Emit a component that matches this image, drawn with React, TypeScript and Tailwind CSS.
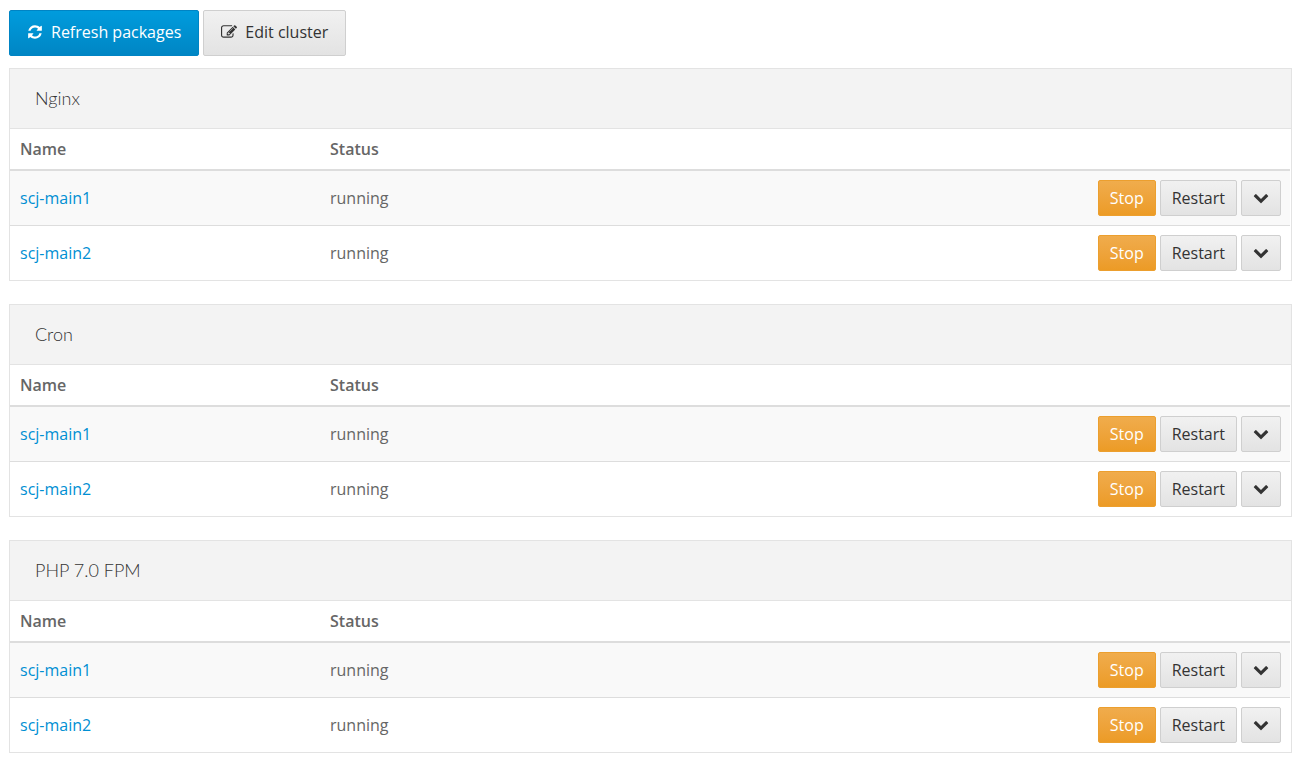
import clsx from 'clsx'
import type { ButtonHTMLAttributes } from 'react'

interface Node {
  name: string
  status: string
}

interface Service {
  id: string
  title: string
  nodes: Node[]
}

const nodes: Node[] = [
  { name: 'scj-main1', status: 'running' },
  { name: 'scj-main2', status: 'running' },
]

const services: Service[] = [
  { id: 'nginx', title: 'Nginx', nodes },
  { id: 'cron', title: 'Cron', nodes },
  { id: 'php-fpm', title: 'PHP 7.0 FPM', nodes },
]

const ICONS = {
  refresh:
    'M1639 1056q0 5-1 7-64 268-268 434.5t-478 166.5q-146 0-282.5-55t-243.5-157l-129 129q-19 19-45 19t-45-19-19-45v-448q0-26 19-45t45-19h448q26 0 45 19t19 45-19 45l-137 137q71 66 161 102t187 36q134 0 250-65t186-179q11-17 53-117 8-23 30-23h192q13 0 22.5 9.5t9.5 22.5zm25-800v448q0 26-19 45t-45 19h-448q-26 0-45-19t-19-45 19-45l138-138q-148-137-349-137-134 0-250 65t-186 179q-11 17-53 117-8 23-30 23h-199q-13 0-22.5-9.5t-9.5-22.5v-7q65-268 270-434.5t480-166.5q146 0 284 55.5t245 156.5l130-129q19-19 45-19t45 19 19 45z',
  edit: 'M888 1184l116-116-152-152-116 116v56h96v96h56zm440-720q-16-16-33 1l-350 350q-17 17-1 33t33-1l350-350q17-17 1-33zm80 594v190q0 119-84.5 203.5t-203.5 84.5h-832q-119 0-203.5-84.5t-84.5-203.5v-832q0-119 84.5-203.5t203.5-84.5h832q63 0 117 25 15 7 18 23 3 17-9 29l-49 49q-14 14-32 8-23-6-45-6h-832q-66 0-113 47t-47 113v832q0 66 47 113t113 47h832q66 0 113-47t47-113v-126q0-13 9-22l64-64q15-15 35-7t20 29zm-96-738l288 288-672 672h-288v-288zm444 132l-92 92-288-288 92-92q28-28 68-28t68 28l152 152q28 28 28 68t-28 68z',
  chevronDown:
    'M1683 728l-742 741q-19 19-45 19t-45-19l-742-741q-19-19-19-45.5t19-45.5l166-165q19-19 45-19t45 19l531 531 531-531q19-19 45-19t45 19l166 165q19 19 19 45.5t-19 45.5z',
}

function Icon({ name }: { name: keyof typeof ICONS }) {
  return (
    <svg viewBox="0 0 1792 1792" fill="currentColor" aria-hidden="true" className="size-4 shrink-0">
      <path d={ICONS[name]} />
    </svg>
  )
}

interface ButtonProps extends ButtonHTMLAttributes<HTMLButtonElement> {
  variant?: 'default' | 'primary' | 'warning'
  size?: 'sm' | 'lg'
}

function Button({ variant = 'default', size = 'sm', className, ...props }: ButtonProps) {
  return (
    <button
      type="button"
      className={clsx(
        'inline-flex items-center rounded-xs border bg-linear-to-b text-base/6 cursor-pointer',
        variant === 'default' && 'border-[#cfcfcf] from-[#f1f1f1] to-[#e3e3e3] text-[#333]',
        variant === 'primary' && 'border-[#0084c4] from-[#009cdd] to-[#0086c4] text-white',
        variant === 'warning' && 'border-[#ec9f2e] from-[#f0ac4c] to-[#ec9b25] text-white',
        size === 'lg' ? 'h-[46px] gap-2 px-[17px] pb-0.5' : 'h-9 px-[11px]',
        className,
      )}
      {...props}
    />
  )
}

function ServicePanel({ service }: { service: Service }) {
  return (
    <section className="border border-[#e3e3e3] bg-white">
      <h2 className="border-b border-[#e3e3e3] bg-[#f3f3f3] px-[25px] py-4 font-[Lato] text-lg/[27px] font-light text-[#333]">
        {service.title}
      </h2>

      <div className="pr-px">
        <table className="w-full table-fixed border-separate border-spacing-0 text-left">
          <thead>
            <tr className="h-[42px]">
              <th className="w-[310px] border-b-2 border-[#ddd] px-[10px] font-semibold">Name</th>
              <th className="border-b-2 border-[#ddd] px-[10px] font-semibold">Status</th>
              <th className="w-[210px] border-b-2 border-[#ddd]" aria-label="Actions" />
            </tr>
          </thead>
          <tbody className="[&>tr:nth-child(odd)]:bg-[#f9f9f9] [&>tr+tr>td]:border-t [&>tr+tr>td]:border-[#ddd]">
            {service.nodes.map((node) => (
              <tr key={node.name}>
                <td className="px-[10px] py-[9px]">
                  <a href={`#${service.id}/${node.name}`} className="text-[#008fd3] hover:underline">
                    {node.name}
                  </a>
                </td>
                <td className="px-[10px] py-[9px]">{node.status}</td>
                <td className="px-[9px] py-[9px]">
                  <div className="flex justify-end gap-1">
                    <Button variant="warning">Stop</Button>
                    <Button>Restart</Button>
                    <Button aria-label={`More actions for ${node.name}`}>
                      <Icon name="chevronDown" />
                    </Button>
                  </div>
                </td>
              </tr>
            ))}
          </tbody>
        </table>
      </div>
    </section>
  )
}

export default function App() {
  return (
    <main className="min-h-screen bg-white pt-[10px] pr-[5px] pb-2 pl-[9px] font-['Open_Sans',sans-serif] text-base/6 text-[#666]">
      <div className="mb-3 flex gap-1">
        <Button variant="primary" size="lg">
          <Icon name="refresh" />
          Refresh packages
        </Button>
        <Button size="lg">
          <Icon name="edit" />
          Edit cluster
        </Button>
      </div>

      <div className="flex flex-col gap-[23px]">
        {services.map((service) => (
          <ServicePanel key={service.id} service={service} />
        ))}
      </div>
    </main>
  )
}
